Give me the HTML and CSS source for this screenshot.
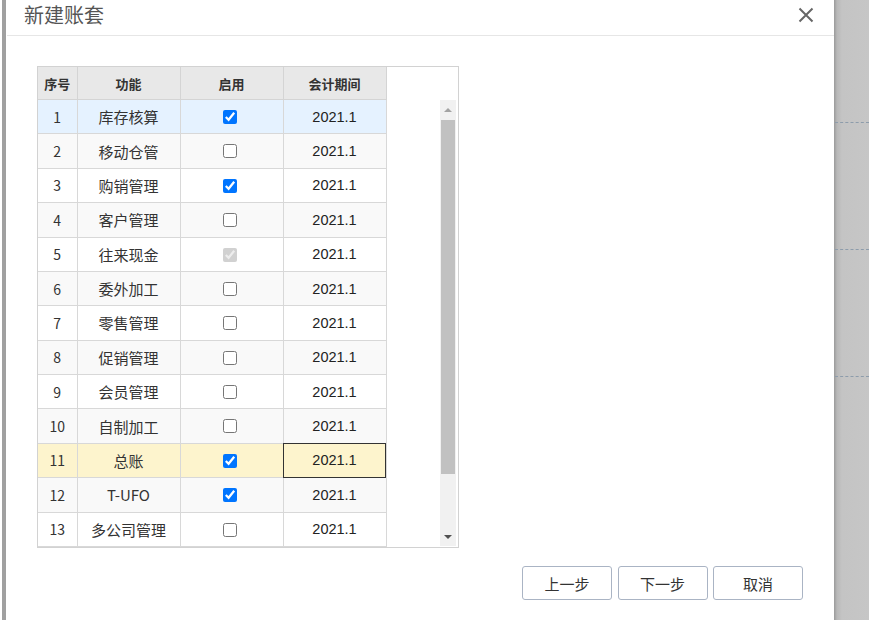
FILE: index.html
```html
<!DOCTYPE html>
<html lang="zh-CN">
<head>
<meta charset="utf-8">
<title>新建账套</title>
<link rel="stylesheet" href="styles.css">
</head>
<body>
<div class="page">
  <div class="left-strip"><div class="left-line"></div></div>
  <div class="dialog">
    <div class="dlg-head">
      <span class="dlg-title">新建账套</span>
      <svg class="close" width="16" height="16" viewBox="0 0 16 16"><path d="M1.5 1.5 L14.5 14.5 M14.5 1.5 L1.5 14.5" stroke="#666" stroke-width="2" fill="none"/></svg>
    </div>
    <div class="dlg-body">
      <div class="grid">
        <table class="tbl">
          <colgroup><col class="c1"><col class="c2"><col class="c3"><col class="c4"></colgroup>
          <thead>
            <tr><th>序号</th><th>功能</th><th>启用</th><th>会计期间</th></tr>
          </thead>
          <tbody>
            <tr class="sel"><td>1</td><td>库存核算</td><td><input type="checkbox" checked></td><td class="num">2021.1</td></tr>
            <tr class="alt"><td>2</td><td>移动仓管</td><td><input type="checkbox"></td><td class="num">2021.1</td></tr>
            <tr><td>3</td><td>购销管理</td><td><input type="checkbox" checked></td><td class="num">2021.1</td></tr>
            <tr class="alt"><td>4</td><td>客户管理</td><td><input type="checkbox"></td><td class="num">2021.1</td></tr>
            <tr><td>5</td><td>往来现金</td><td><input type="checkbox" checked disabled></td><td class="num">2021.1</td></tr>
            <tr class="alt"><td>6</td><td>委外加工</td><td><input type="checkbox"></td><td class="num">2021.1</td></tr>
            <tr><td>7</td><td>零售管理</td><td><input type="checkbox"></td><td class="num">2021.1</td></tr>
            <tr class="alt"><td>8</td><td>促销管理</td><td><input type="checkbox"></td><td class="num">2021.1</td></tr>
            <tr><td>9</td><td>会员管理</td><td><input type="checkbox"></td><td class="num">2021.1</td></tr>
            <tr class="alt"><td>10</td><td>自制加工</td><td><input type="checkbox"></td><td class="num">2021.1</td></tr>
            <tr class="cur"><td>11</td><td>总账</td><td><input type="checkbox" checked></td><td class="num focus">2021.1</td></tr>
            <tr class="alt"><td>12</td><td>T-UFO</td><td><input type="checkbox" checked></td><td class="num">2021.1</td></tr>
            <tr><td>13</td><td>多公司管理</td><td><input type="checkbox"></td><td class="num">2021.1</td></tr>
          </tbody>
        </table>
        <div class="filler"></div>
        <div class="vscroll">
          <div class="arrow up"></div>
          <div class="thumb"></div>
          <div class="track-rest"></div>
          <div class="arrow down"></div>
        </div>
      </div>
    </div>
    <div class="dlg-foot">
      <button class="btn">上一步</button>
      <button class="btn">下一步</button>
      <button class="btn">取消</button>
    </div>
  </div>
  <div class="backdrop">
    <div class="dash d1"></div>
    <div class="dash d2"></div>
    <div class="dash d3"></div>
  </div>
</div>
</body>
</html>
```
FILE: styles.css
```css
html, body {
  margin: 0;
  padding: 0;
  background: #ffffff;
}
.page {
  display: flex;
  width: 869px;
  height: 620px;
  overflow: hidden;
  font-family: "Noto Sans CJK SC", "Liberation Sans", sans-serif;
  color: #333;
}
.left-strip {
  width: 7px;
  flex: none;
  display: flex;
  background: #fff;
}
.left-line {
  width: 4px;
  margin-left: 2px;
  background: #a0a0a0;
}
.dialog {
  width: 827px;
  flex: none;
  background: #fff;
  display: flex;
  flex-direction: column;
}
.dlg-head {
  border-bottom: 1px solid #e6e6e6;
  display: flex;
  align-items: center;
  justify-content: space-between;
  padding: 0 20px 5px 17px;
  box-sizing: border-box;
  height: 36px;
}
.dlg-title {
  font-size: 20px;
  color: #555;
  line-height: 24px;
}
.close {
  display: block;
}
.dlg-body {
  padding: 30px 0 0 30px;
}
.grid {
  width: 422px;
  height: 482px;
  border: 1px solid #d2d2d2;
  box-sizing: border-box;
  display: flex;
  overflow: hidden;
}
.tbl {
  border-collapse: collapse;
  table-layout: fixed;
  width: 348px;
  flex: none;
  font-size: 15px;
}
.c1 { width: 39px; }
.c2 { width: 103px; }
.c3 { width: 103px; }
.c4 { width: 103px; }
.tbl th {
  height: 32px;
  background: #e8e8e8;
  font-weight: bold;
  font-size: 13px;
  color: #333;
  border: 1px solid #d4d4d4;
  border-top: none;
  padding: 0;
}
.tbl th:first-child, .tbl td:first-child { border-left: none; }
.tbl td {
  height: 33.2px;
  padding: 0;
  text-align: center;
  border: 1px solid #d8d8d8;
  color: #333;
  box-sizing: border-box;
}
.tbl td:first-child { font-size: 14px; }
.tbl td.num {
  font-family: "Liberation Sans", Arial, sans-serif;
  font-size: 14.5px;
  color: #222;
}
.tbl tr.alt td { background: #f9f9f9; }
.tbl tr.sel td { background: #e5f2ff; }
.tbl tr.cur td { background: #fdf4cd; }
.tbl td.focus { outline: 1px solid #333; outline-offset: -1px; }
.tbl input[type="checkbox"] {
  width: 14px;
  height: 14px;
  margin: 0;
  vertical-align: middle;
  position: relative;
  top: -2px;
  left: -2px;
}
.filler {
  flex: 1;
}
.vscroll {
  width: 16px;
  flex: none;
  margin: 33px 2px 0 0;
  background: #f1f1f1;
  display: flex;
  flex-direction: column;
  height: 446px;
}
.arrow {
  height: 19px;
  flex: none;
  display: flex;
  align-items: center;
  justify-content: center;
}
.arrow.up::before {
  content: "";
  border-left: 4px solid transparent;
  border-right: 4px solid transparent;
  border-bottom: 4px solid #a3a3a3;
}
.arrow.down::before {
  content: "";
  border-left: 4px solid transparent;
  border-right: 4px solid transparent;
  border-top: 4px solid #505050;
}
.thumb {
  height: 354px;
  flex: none;
  background: #c1c1c1;
  margin: 1px 1px 0 1px;
}
.track-rest { flex: 1; }
.dlg-foot {
  display: flex;
  justify-content: flex-end;
  gap: 5.5px;
  padding: 18px 31px 0 0;
}
.btn {
  width: 90px;
  height: 34px;
  border: 1px solid #aab4c4;
  border-radius: 3px;
  background: #fff;
  font-family: "Noto Sans CJK SC", "Liberation Sans", sans-serif;
  font-size: 15px;
  color: #333;
  padding: 0;
}
.backdrop {
  flex: 1;
  background: linear-gradient(to right, #9a9a9a 0px, #b8b8b8 3px, #c4c4c4 8px, #c6c6c6 100%);
  display: flex;
  flex-direction: column;
}
.dash {
  height: 0;
  border-top: 1px dashed #8d9cab;
  margin-left: 1px;
}
.d1 { margin-top: 122px; }
.d2 { margin-top: 126px; }
.d3 { margin-top: 126px; }
```
